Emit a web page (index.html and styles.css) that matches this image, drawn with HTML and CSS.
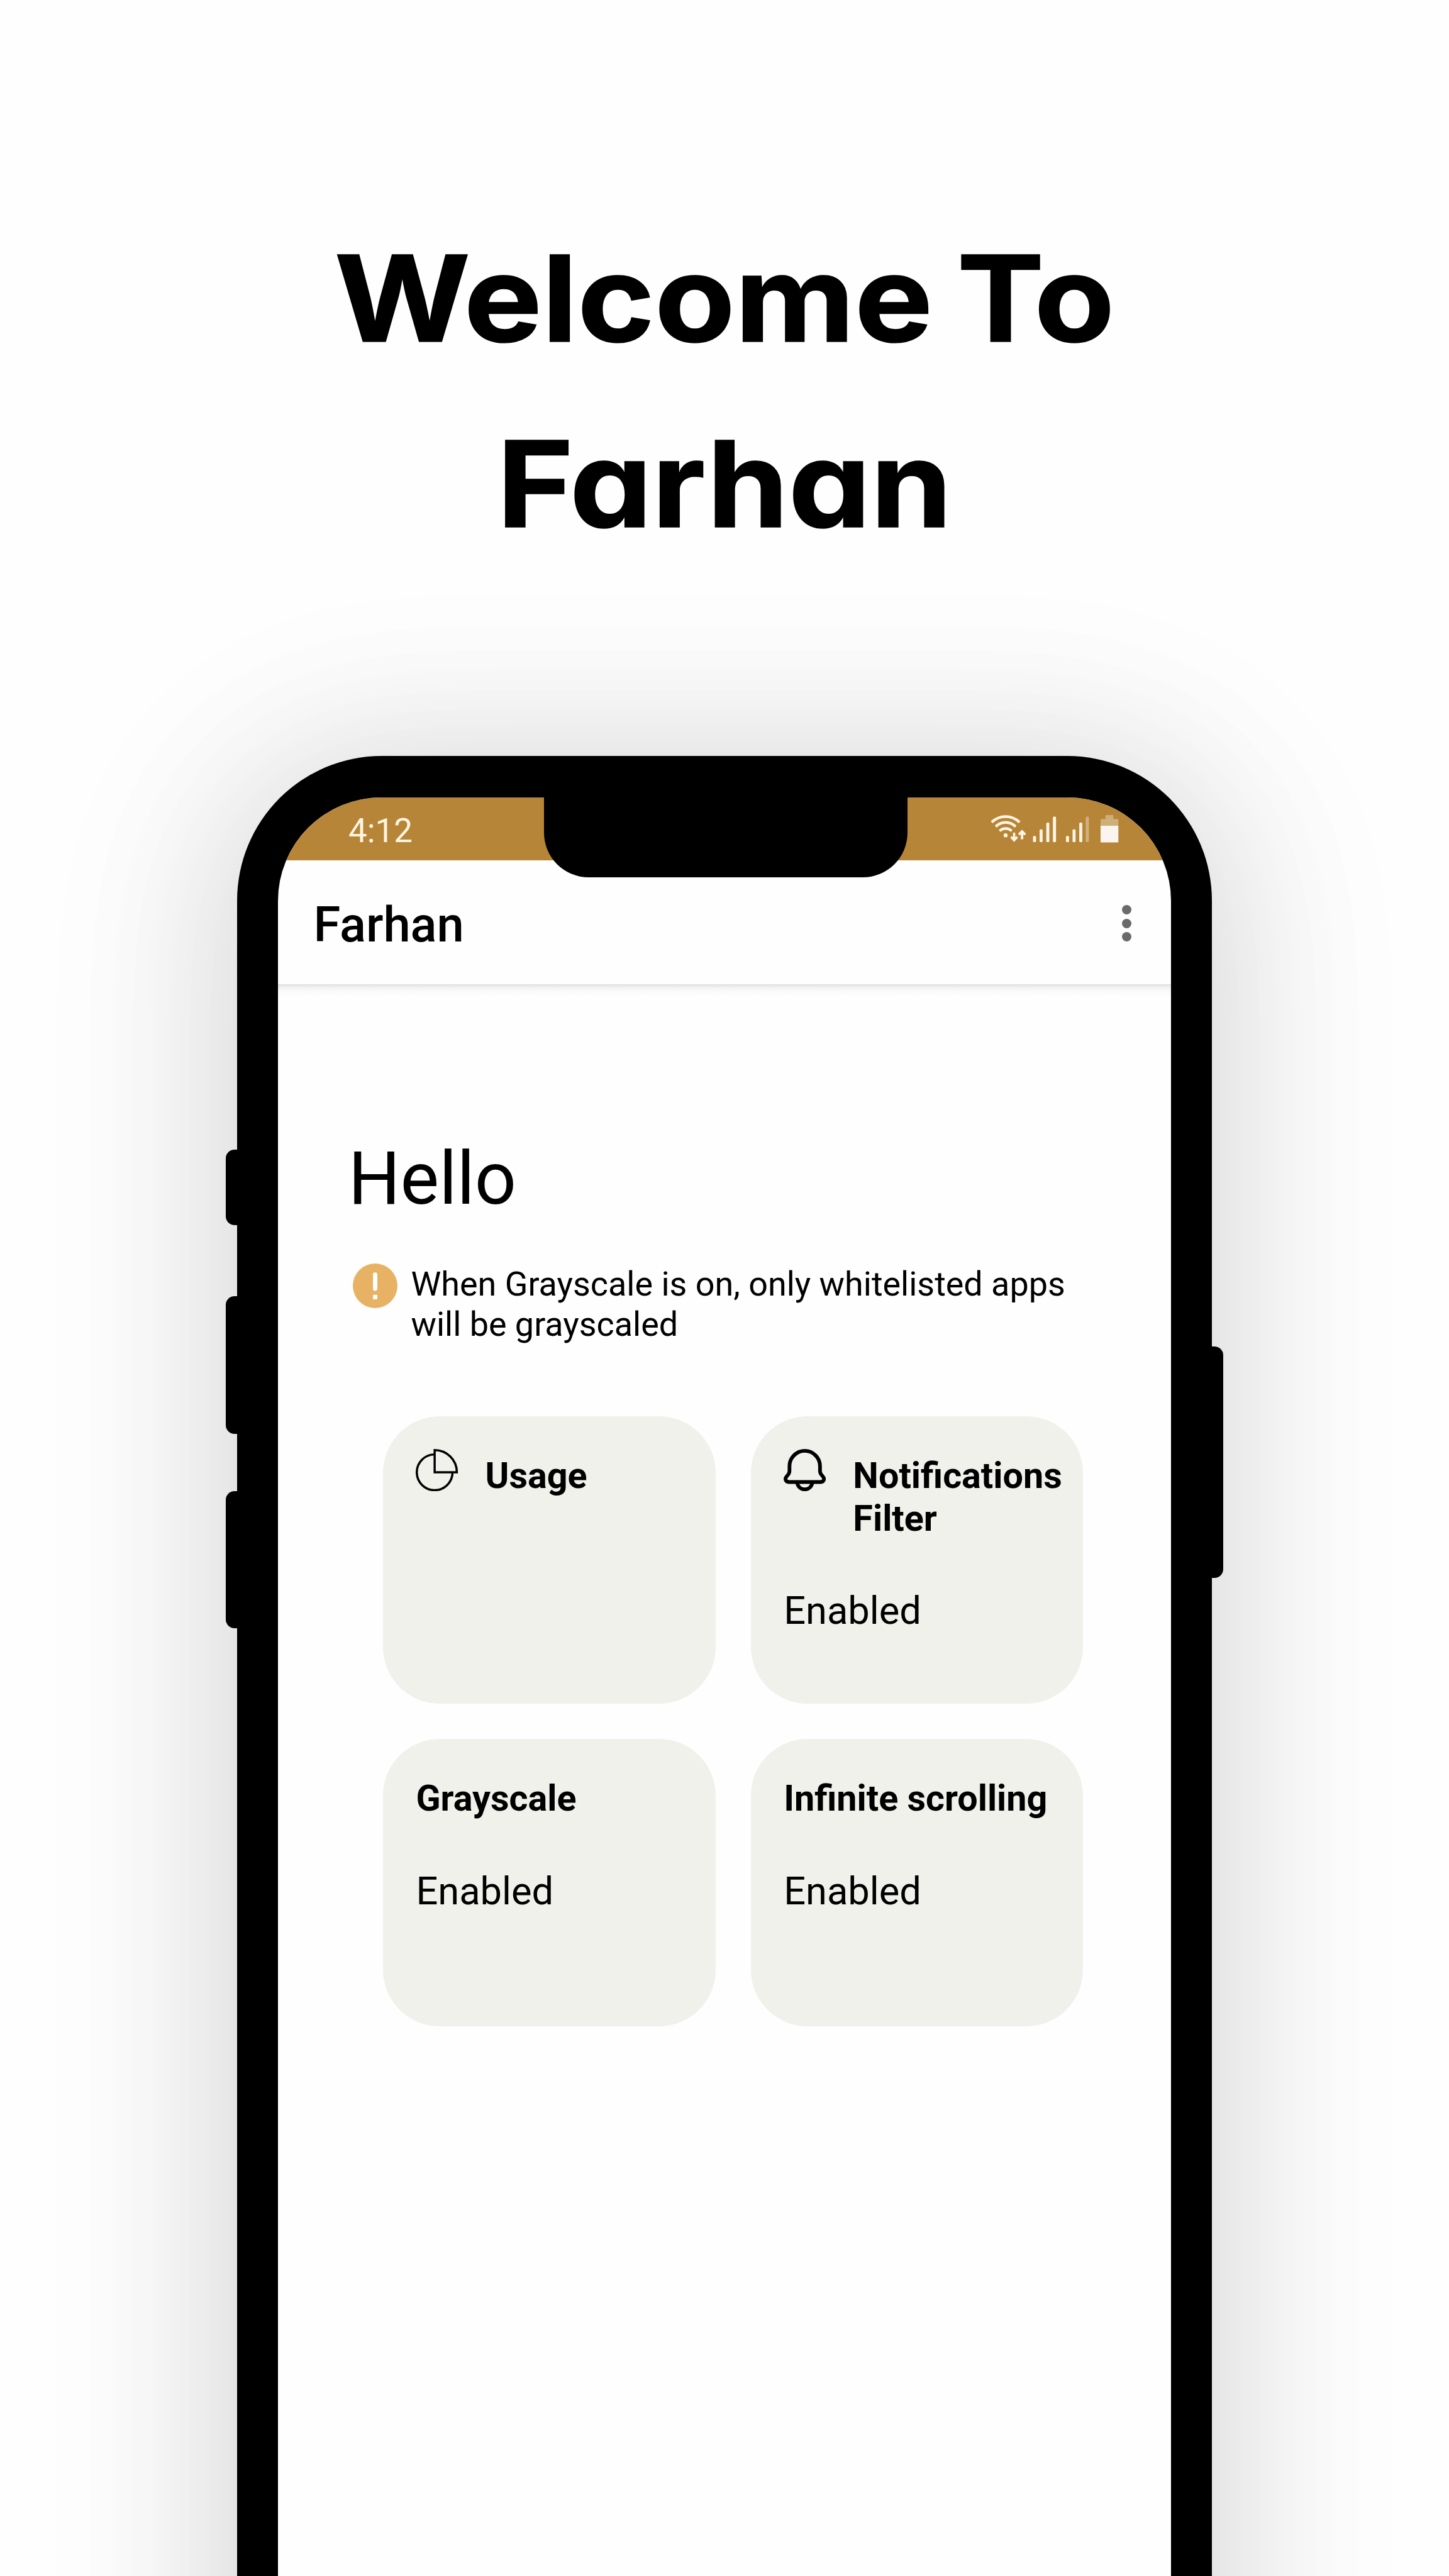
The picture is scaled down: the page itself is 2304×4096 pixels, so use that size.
FILE: index.html
```html
<!DOCTYPE html>
<html lang="en">
<head>
<meta charset="utf-8">
<title>Welcome To Farhan</title>
<link rel="stylesheet" href="styles.css">
</head>
<body>
<main class="poster">
  <h1 class="headline"><span class="headline-line welcome">Welcome To</span><span class="headline-line name">Farhan</span></h1>
  <div class="phone">
    <span class="key key-mute"></span>
    <span class="key key-up"></span>
    <span class="key key-down"></span>
    <span class="key key-power"></span>
    <div class="notch"></div>
    <div class="screen">
      <div class="status">
        <span class="time">4:12</span>
        <svg class="status-icons" viewBox="95 85 1150 255" fill="#fff5e3">
          <g fill="none" stroke="#fff5e3" stroke-width="24">
            <path d="M105 155Q160 104 230 104T355 155"/>
            <path d="M141 194Q180 156 230 156T319 194"/>
            <path d="M176 233Q200 211 230 211T284 233"/>
          </g>
          <circle cx="230" cy="272" r="18"/>
          <path d="M296 248h20v39l14-8 10 15-34 37-34-37 10-15 14 8z"/>
          <path d="M366 307h22v-43l14 8 10-15-35-36-35 36 10 15 14-8z"/>
          <rect x="475" y="278" width="27" height="55" rx="9"/>
          <rect x="534" y="218" width="27" height="115" rx="9"/>
          <rect x="594" y="158" width="27" height="175" rx="9"/>
          <rect x="653" y="104" width="28" height="229" rx="9"/>
          <rect x="770" y="278" width="27" height="55" rx="9"/>
          <rect x="829" y="218" width="27" height="115" rx="9"/>
          <rect x="889" y="158" width="27" height="175" rx="9"/>
          <rect x="947" y="104" width="28" height="229" rx="9" fill="#d2b07b"/>
          <path fill="#d0ae78" d="M1080 186v-52q0-8 8-8h36V96q0-6 6-6h58q6 0 6 6v30h37q8 0 8 8v52z"/>
          <path fill="#faf6ef" d="M1080 186h159v142q0 8-8 8h-143q-8 0-8-8z"/>
        </svg>
      </div>
      <header class="appbar">
        <span class="app-title">Farhan</span>
        <span class="menu"><i class="dot"></i><i class="dot"></i><i class="dot"></i></span>
      </header>
      <section class="content">
        <h2 class="hello">Hello</h2>
        <div class="alert">
          <svg class="alert-icon" viewBox="0 0 133 133"><circle cx="66.500" cy="66.500" r="66.500" fill="#e8b264"/><path d="M66.500 33v42" stroke="#fff" stroke-width="13" stroke-linecap="round"/><rect x="60" y="93" width="13" height="14" rx="2" fill="#fff"/></svg>
          <p class="alert-text">When Grayscale is on, only whitelisted apps<br>will be grayscaled</p>
        </div>
        <div class="cards">
          <article class="card">
            <div class="card-head">
              <svg class="card-icon" viewBox="0 0 126 126" fill="none" stroke="#000" stroke-width="6.500"><path d="M56.500 3.300V69.500H122.700A66.200 66.200 0 0 0 56.500 3.300Z"/><path d="M56.500 16.200A53.300 53.300 0 1 0 109.800 69.500"/></svg>
              <h3 class="card-title">Usage</h3>
            </div>
          </article>
          <article class="card">
            <div class="card-head">
              <svg class="card-icon" viewBox="0 0 126 126" fill="none" stroke="#000" stroke-width="11" stroke-linejoin="round"><path d="M63 5.500C38 5.500 17.500 26 17.500 51V66C17.500 72 15 75 11 79.500C7.500 83.500 5.500 86 5.500 89C5.500 95 10 98.500 16 98.500H110C116 98.500 120.500 95 120.500 89C120.500 86 118.500 83.500 115 79.500C111 75 108.500 72 108.500 66V51C108.500 26 88 5.500 63 5.500Z"/><path d="M40 99.500C42 112 51 120.500 63 120.500S84 112 86 99.500"/></svg>
              <h3 class="card-title">Notifications<br>Filter</h3>
            </div>
            <p class="card-state">Enabled</p>
          </article>
          <article class="card">
            <div class="card-head"><h3 class="card-title">Grayscale</h3></div>
            <p class="card-state">Enabled</p>
          </article>
          <article class="card">
            <div class="card-head"><h3 class="card-title">Infinite scrolling</h3></div>
            <p class="card-state">Enabled</p>
          </article>
        </div>
      </section>
    </div>
  </div>
</main>
</body>
</html>
```
FILE: styles.css
```css
* { box-sizing: border-box; margin: 0; padding: 0; }
html, body { width: 2304px; height: 4096px; overflow: hidden; background: #fefefe; }
body { font-family: Roboto, sans-serif; color: #000; }

.poster { width: 2304px; height: 4096px; overflow: hidden; padding-top: 327.300px; }

.headline {
  font: 700 190px/294.600px Inter, sans-serif;
  font-feature-settings: "cv11" 1;
  -webkit-text-stroke: 1.500px #000;
  text-align: center;
}
.headline-line { display: block; white-space: nowrap; transform: scaleX(1.092); }
.welcome { word-spacing: -10px; transform: scaleX(1.097); }

.phone {
  position: relative;
  width: 1550.600px;
  height: 3500px;
  margin: 285.600px auto 0;
  padding: 65.700px 65.700px 0;
  background: #000;
  border-radius: 230px 230px 0 0;
  box-shadow:
    0 24px 270px rgba(0, 0, 0, .125),
    0 30px 300px 120px rgba(0, 0, 0, .042);
}
.key { position: absolute; left: -18px; width: 40px; background: #000; border-radius: 14px; }
.key-mute { top: 626.200px; height: 120.200px; }
.key-up { top: 859.200px; height: 218.800px; }
.key-down { top: 1168.700px; height: 218.200px; }
.key-power { top: 939px; left: auto; right: -18px; height: 367.600px; }
.notch {
  position: absolute;
  z-index: 2;
  top: 60px;
  left: 487.800px;
  width: 578.700px;
  height: 132.700px;
  background: #000;
  border-radius: 0 0 71px 71px;
}

.screen {
  height: 100%;
  overflow: hidden;
  background: #fefefe;
  border-radius: 164.300px 164.300px 0 0;
}
.status {
  display: flex;
  justify-content: space-between;
  align-items: flex-start;
  height: 100px;
  padding: 21.800px 82.500px 0 111.500px;
  background: #b68538;
}
.time { font-size: 53px; line-height: 62px; color: #fff5e3; }
.status-icons { width: 204.400px; height: 45.300px; margin-top: 5.400px; }

.appbar {
  display: flex;
  justify-content: space-between;
  align-items: center;
  height: 197.500px;
  padding: 3px 62.600px 0 56px;
}
.app-title { font-size: 77.800px; font-weight: 500; padding-top: 4px; }
.menu { display: flex; flex-direction: column; gap: 6.200px; }
.dot { width: 15px; height: 15px; border-radius: 50%; background: #6a6a6a; }

.content {
  padding: 240.400px 0 0 119.100px;
  background: linear-gradient(#e1e1e1, #e5e5e5 2px, #f2f2f2 5px, #fafafa 11px, #fefefe 20px);
}
.hello { font-size: 116.200px; line-height: 136.500px; font-weight: 400; margin-left: -7.800px; }
.alert { display: flex; gap: 21px; margin-top: 66.700px; }
.alert-icon { width: 71px; height: 71px; }
.alert-text { font-size: 53.900px; line-height: 64.300px; padding-top: 1px; white-space: nowrap; }

.cards {
  display: grid;
  grid-template-columns: 528.300px 528.300px;
  grid-auto-rows: 457px;
  gap: 56.500px;
  margin: 113.300px 0 0 47.900px;
}
.card { padding: 52.400px 0 0 52px; background: #f0f1eb; border-radius: 90px; }
.card-head { display: flex; gap: 43px; }
.card-icon { flex: none; width: 67.200px; height: 67.200px; }
.card-title { margin-top: 8.500px; font-size: 57.500px; line-height: 68px; font-weight: 700; white-space: nowrap; }
.card-state { margin-top: 77.400px; font-size: 61.400px; line-height: 71px; }
```
